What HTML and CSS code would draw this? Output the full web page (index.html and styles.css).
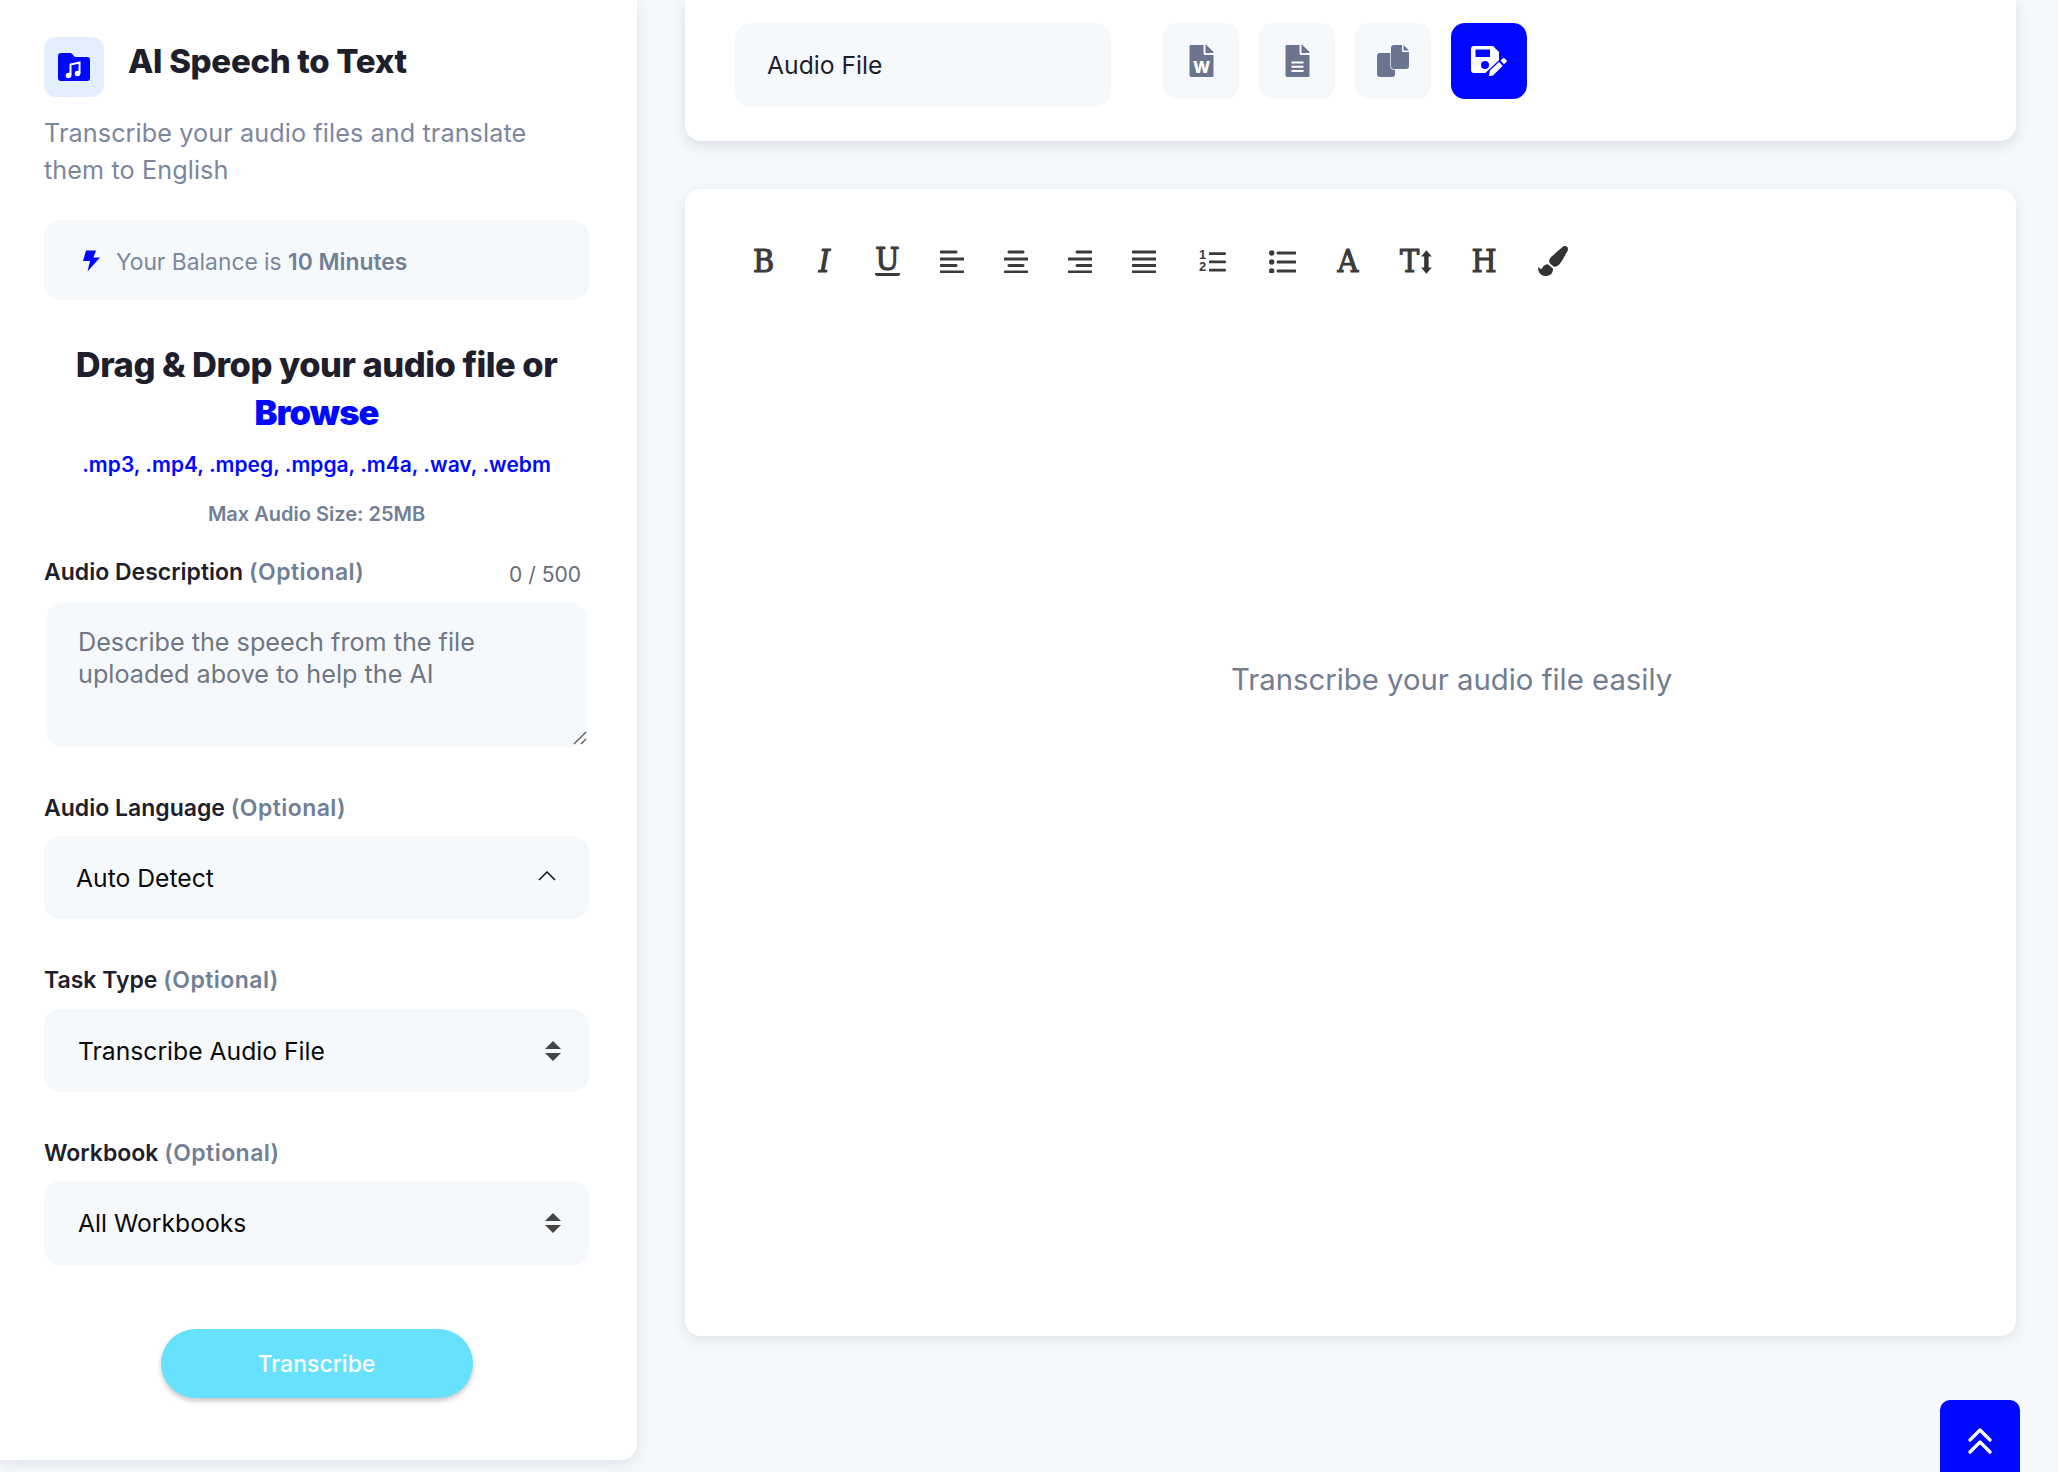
FILE: index.html
```html
<!DOCTYPE html>
<html lang="en">
<head>
<meta charset="utf-8">
<title>AI Speech to Text</title>
<link rel="stylesheet" href="styles.css">
</head>
<body>
<div class="page">
  <aside class="panel">
    <header class="head">
      <div class="head-icon">
        <svg class="folder" viewBox="0 0 32 28"><path fill="#0008ff" d="M3 0h10l4 4h12a3 3 0 0 1 3 3v18a3 3 0 0 1-3 3H3a3 3 0 0 1-3-3V3a3 3 0 0 1 3-3z"/><path fill="none" stroke="#fff" stroke-width="2" d="M12.500 22.500V11.500l9-2V20.500"/><circle cx="10.500" cy="22.500" r="2.800" fill="#fff"/><circle cx="19.500" cy="20.500" r="2.800" fill="#fff"/></svg>
      </div>
      <h1 class="title">AI Speech to Text</h1>
    </header>
    <p class="subtitle">Transcribe your audio files and translate them to English</p>
    <div class="balance">
      <svg class="bolt" viewBox="0 0 17 21"><path fill="#0008ff" d="M3 0h10l-2.500 7H17L4.500 21 7 10.500H0z"/></svg>
      <span>Your Balance is <b>10 Minutes</b></span>
    </div>
    <h2 class="drop">Drag &amp; Drop your audio file or <span class="browse">Browse</span></h2>
    <p class="exts">.mp3, .mp4, .mpeg, .mpga, .m4a, .wav, .webm</p>
    <p class="max">Max Audio Size: 25MB</p>
    <div class="label-row first">
      <label class="label">Audio Description <span class="opt">(Optional)</span></label>
      <span class="count">0 / 500</span>
    </div>
    <div class="area-wrap">
      <textarea class="area" placeholder="Describe the speech from the file uploaded above to help the AI"></textarea>
      <svg class="resizer" viewBox="0 0 14 14"><path d="M1 13L13 1M8 13l5-5" fill="none" stroke="#555" stroke-width="1.300"/></svg>
    </div>
    <label class="label field-label">Audio Language <span class="opt">(Optional)</span></label>
    <div class="select sel-lang">
      <span>Auto Detect</span>
      <svg class="chev" viewBox="0 0 18 10"><path d="M1 9l8-8 8 8" fill="none" stroke="#111" stroke-width="1.500"/></svg>
    </div>
    <label class="label field-label">Task Type <span class="opt">(Optional)</span></label>
    <div class="select sel-std">
      <span>Transcribe Audio File</span>
      <svg class="sort" viewBox="0 0 16 20"><path fill="#444" d="M8 0l8 8H0zM0 12h16l-8 8z"/></svg>
    </div>
    <label class="label field-label">Workbook <span class="opt">(Optional)</span></label>
    <div class="select sel-std tall">
      <span>All Workbooks</span>
      <svg class="sort" viewBox="0 0 16 20"><path fill="#444" d="M8 0l8 8H0zM0 12h16l-8 8z"/></svg>
    </div>
    <button class="go">Transcribe</button>
  </aside>

  <main class="main">
    <section class="top-card">
      <div class="name-input">Audio File</div>
      <div class="actions">
        <div class="act">
          <svg class="doc" viewBox="0 0 384 512"><path fill="#6b7590" d="M224 136V0H24C10.700 0 0 10.700 0 24v464c0 13.300 10.700 24 24 24h336c13.300 0 24-10.700 24-24V160H248c-13.200 0-24-10.800-24-24zm160-14.100v6.100H256V0h6.100c6.400 0 12.500 2.500 17 7l97.900 98c4.500 4.500 7 10.600 7 16.900z"/><text x="192" y="455" text-anchor="middle" class="doc-w">W</text></svg>
        </div>
        <div class="act">
          <svg class="doc" viewBox="0 0 384 512"><path fill="#6b7590" d="M224 136V0H24C10.700 0 0 10.700 0 24v464c0 13.300 10.700 24 24 24h336c13.300 0 24-10.700 24-24V160H248c-13.200 0-24-10.800-24-24zm160-14.100v6.100H256V0h6.100c6.400 0 12.500 2.500 17 7l97.900 98c4.500 4.500 7 10.600 7 16.900z"/><path fill="#fff" d="M96 262h192v34H96zM96 330h192v34H96zM96 398h192v34H96z"/></svg>
        </div>
        <div class="act">
          <svg class="copy" viewBox="0 0 32 32"><rect y="8" width="18" height="24" rx="3" fill="#6b7590"/><path fill="#6b7590" stroke="#f5f8fc" stroke-width="1.400" paint-order="stroke" d="M17 0h8v7h7v14a3 3 0 0 1-3 3H17a3 3 0 0 1-3-3V3a3 3 0 0 1 3-3z"/><path fill="#6b7590" d="M26.500 0L32 5.500h-5.500z"/></svg>
        </div>
        <div class="act active">
          <svg class="save" viewBox="0 0 36 30"><path fill="#fff" d="M3 0h19l6 6v18a3 3 0 0 1-3 3H3a3 3 0 0 1-3-3V3a3 3 0 0 1 3-3z"/><path fill="#0008ff" d="M4.500 3.500h14.500v7.500H4.500z"/><circle cx="14" cy="19" r="4" fill="#0008ff"/><path stroke="#0008ff" stroke-width="11" d="M16 33L33 17"/><path fill="#fff" d="M18 30l1-5.500 9-8.500 3.700 3.700-9.200 9.300c-1.200.8-3 1-4.500 1zM29.500 14.500l2.600-2.300a1 1 0 0 1 1.300 0l2.300 2.300a1 1 0 0 1 0 1.300L33 18.200z"/></svg>
        </div>
      </div>
    </section>

    <section class="editor">
      <div class="toolbar">
        <span class="tool w21 letter">B</span>
        <span class="tool w21 letter ital">I</span>
        <span class="tool w25 letter under">U</span>
        <svg class="tool w24" viewBox="0 0 24 24"><path class="ln" d="M1 3h15M1 10h23M1 16.500h15M1 23h23"/></svg>
        <svg class="tool w24" viewBox="0 0 24 24"><path class="ln" d="M5 3h14M1 10h23M5 16.500h14M1 23h23"/></svg>
        <svg class="tool w24" viewBox="0 0 24 24"><path class="ln" d="M9 3h14M1 10h23M9 16.500h14M1 23h23"/></svg>
        <svg class="tool w24" viewBox="0 0 24 24"><path class="ln" d="M1 3h23M1 10h23M1 16.500h23M1 23h23"/></svg>
        <span class="tool w33 ol">
          <span class="nums"><span>1</span><span>2</span></span>
          <svg class="ol-lines" viewBox="0 0 18 24"><path class="ln" d="M1 4h16M1 13h16M1 22h16"/></svg>
        </span>
        <svg class="tool w27" viewBox="0 0 27 24"><circle cx="2.700" cy="4" r="2.700" class="dot"/><circle cx="2.700" cy="13" r="2.700" class="dot"/><circle cx="2.700" cy="22" r="2.700" class="dot"/><path class="ln" d="M9 4h17M9 13h17M9 22h17"/></svg>
        <span class="tool w24 letter">A</span>
        <span class="tool w32 size">
          <span class="letter">T</span>
          <svg class="updown" viewBox="0 0 12 26"><path fill="#333" d="M6 0l6 7H8.500v12H12l-6 7-6-7h3.500V7H0z"/></svg>
        </span>
        <span class="tool w24 letter">H</span>
        <svg class="tool brush" viewBox="0 0 512 512"><path fill="#333" d="M167.020 309.340c-40.120 2.580-76.530 17.860-97.190 72.300-2.350 6.210-8 9.980-14.590 9.980-11.110 0-45.460-27.670-55.250-34.350C0 439.620 37.930 512 128 512c75.860 0 128-43.770 128-120.190 0-3.110-.65-6.080-.97-9.130l-88.010-73.340zM457.890 0c-15.160 0-29.370 6.710-40.210 16.450C213.270 199.050 192 203.340 192 257.090c0 13.700 3.250 26.760 8.730 38.700l63.820 53.180c7.210 1.800 14.640 3.030 22.390 3.030 62.110 0 98.110-45.470 211.160-256.460 7.380-14.350 13.900-29.850 13.900-45.990C512 20.640 486 0 457.890 0z"/></svg>
      </div>
      <p class="empty">Transcribe your audio file easily</p>
    </section>
  </main>
</div>
<button class="to-top" aria-label="Back to top">
  <svg viewBox="0 0 24 26"><path d="M2 12L12 2l10 10M2 24l10-10 10 10" fill="none" stroke="#fff" stroke-width="3.200" stroke-linecap="round" stroke-linejoin="round"/></svg>
</button>
</body>
</html>
```
FILE: styles.css
```css
* { box-sizing: border-box; }
html, body { margin: 0; height: 1472px; overflow: hidden; }
body {
  background: #f6f9fc;
  font-family: "Inter", "Noto Sans", sans-serif;
  color: #1e1e2d;
}
h1, h2, p { margin: 0; }

.page { display: flex; align-items: flex-start; }

.panel {
  width: 637px;
  height: 1460px;
  flex: none;
  padding: 37px 48px 0 44px;
  background: #fff;
  border-bottom-right-radius: 16px;
  box-shadow: 0 4px 16px rgba(60, 70, 90, .12);
}
.head { display: flex; gap: 24px; height: 60px; }
.head-icon {
  width: 60px; height: 60px;
  border-radius: 12px;
  background: #e3efff;
  display: flex; align-items: center; justify-content: center;
}
.folder { width: 32px; height: 28px; }
.title {
  font-size: 33px; line-height: 48px; font-weight: 800;
  letter-spacing: -.3px;
  color: #1e1e2d;
}
.subtitle {
  margin-top: 18px;
  font-size: 25.200px; line-height: 37px;
  color: #7c879e;
  letter-spacing: .1px;
}
.balance {
  margin-top: 31px; height: 80px;
  padding: 1px 0 0 39px;
  display: flex; align-items: center; gap: 16px;
  background: #f6f9fc;
  border-radius: 16px;
  font-size: 22.800px; color: #7c879e;
}
.balance b { font-weight: 600; color: #718096; }
.balance span { padding-top: 2px; }
.bolt { width: 17px; height: 22px; }
.drop {
  margin-top: 41px;
  font-size: 34.500px; line-height: 48px; font-weight: 800;
  text-align: center;
  letter-spacing: -.5px;
}
.browse { display: block; color: #0008ff; font-weight: 900; letter-spacing: -.9px; }
.exts, .max { line-height: 32px; font-weight: 600; text-align: center; }
.exts { margin-top: 12px; font-size: 21px; color: #0008ff; }
.max { margin-top: 17px; font-size: 20px; color: #718096; }

.label-row { display: flex; justify-content: space-between; align-items: center; padding-right: 8px; }
.first { margin-top: 26px; height: 32px; }
.label { font-size: 23px; line-height: 32px; font-weight: 600; color: #1e1e2d; }
.opt { color: #718096; letter-spacing: .45px; }
.count { font-size: 21px; color: #666d7a; margin-top: 4px; }
.field-label { display: block; margin-top: 45px; }

.area-wrap { position: relative; margin: 15px 2px 0; height: 144px; }
.area {
  display: block;
  width: 541px; height: 144px;
  padding: 23px 32px;
  border: 0; outline: 0;
  border-radius: 16px;
  background: #f6f9fc;
  resize: none;
  font: 400 25.200px/32px "Inter", "Noto Sans", sans-serif;
  color: #6b7280;
}
.area::placeholder { color: #6f7684; opacity: 1; }
.resizer { position: absolute; right: 0; bottom: 2px; width: 14px; height: 14px; }

.select {
  height: 83px;
  margin-top: 12px;
  display: flex; align-items: center; justify-content: space-between;
  background: #f6f9fc;
  border-radius: 16px;
  font-size: 24.700px; color: #0a0a0a;
  padding: 0 28px 0 34px;
}
.sel-lang { padding: 0 33px 0 32px; }
.sel-std { margin-top: 13px; }
.tall { height: 84px; margin-top: 12px; }
.chev { width: 18px; height: 10px; margin-top: -4px; }
.sort { width: 16px; height: 20px; }

.go {
  display: block;
  width: 312px; height: 69px;
  margin: 64px auto 0;
  border: 0;
  border-radius: 35px;
  background: #67e1fd;
  color: #fff;
  font: 500 23px "Inter", "Noto Sans", sans-serif;
  box-shadow: 0 3px 5px rgba(0, 0, 0, .22);
}

.main { width: 1331px; margin-left: 48px; flex: none; }
.top-card {
  height: 141px;
  padding: 23px 0 0 50px;
  display: flex; align-items: flex-start; gap: 52px;
  background: #fff;
  border-radius: 0 0 16px 16px;
  box-shadow: 0 4px 14px rgba(60, 70, 90, .16);
}
.name-input {
  width: 376px; height: 84px;
  padding-left: 32px;
  display: flex; align-items: center;
  background: #f6f9fc;
  border-radius: 16px;
  font-size: 24.700px; color: #1e1e2d;
}
.actions { display: flex; gap: 20px; }
.act {
  width: 76px; height: 76px;
  display: flex; align-items: center; justify-content: center;
  background: #f6f9fc;
  border-radius: 14px;
}
.act.active { background: #0008ff; }
.doc { width: 25px; height: 32px; }
.doc-w { font: 800 260px "Inter", "Liberation Sans", sans-serif; fill: #fff; }
.copy { width: 32px; height: 32px; }
.save { width: 36px; height: 30px; }

.editor {
  height: 1147px;
  margin-top: 48px;
  background: #fff;
  border-radius: 16px;
  box-shadow: 0 4px 14px rgba(60, 70, 90, .12);
}
.toolbar {
  padding: 54px 0 0 68px;
  height: 90px;
  display: flex; align-items: center; gap: 40px;
}
.tool { flex: none; height: 24px; display: block; }
.w21 { width: 21px; } .w24 { width: 24px; } .w25 { width: 25px; }
.w27 { width: 27px; } .w32 { width: 32px; } .w33 { width: 33px; }
.brush { width: 30px; height: 30px; margin-left: 2px; }
.ln { stroke: #3a3a3a; stroke-width: 3; stroke-linecap: round; fill: none; }
.dot { fill: #3a3a3a; }
.letter {
  font: 400 32px/24px "DejaVu Serif Condensed", "DejaVu Serif", serif;
  -webkit-text-stroke: 1.100px #3a3a3a;
  color: #3a3a3a;
  text-align: center;
  display: flex; justify-content: center;
  white-space: nowrap;
}
.ital { font-style: italic; }
.under { border-bottom: 3px solid #3a3a3a; height: 28px; border-radius: 2px; line-height: 22px; margin-top: 2px; }
.ol { display: flex; gap: 3px; padding: 0 3px; }
.nums {
  display: flex; flex-direction: column; width: 8px;
  font: 700 13px/12px "Liberation Sans", sans-serif; color: #3a3a3a;
}
.ol-lines { width: 18px; height: 24px; }
.size { display: flex; gap: 2px; }
.size .letter { width: 20px; }
.updown { width: 12px; height: 26px; }

.empty {
  margin-top: 381px;
  padding-left: 202px;
  text-align: center;
  font-size: 29.300px; line-height: 40px;
  color: #737d92;
}

.to-top {
  position: fixed; left: 1940px; bottom: -10px;
  width: 80px; height: 82px;
  padding: 0;
  border: 0;
  border-radius: 10px;
  background: #0008ff;
  display: flex; align-items: center; justify-content: center;
}
.to-top svg { width: 24px; height: 26px; }
```
